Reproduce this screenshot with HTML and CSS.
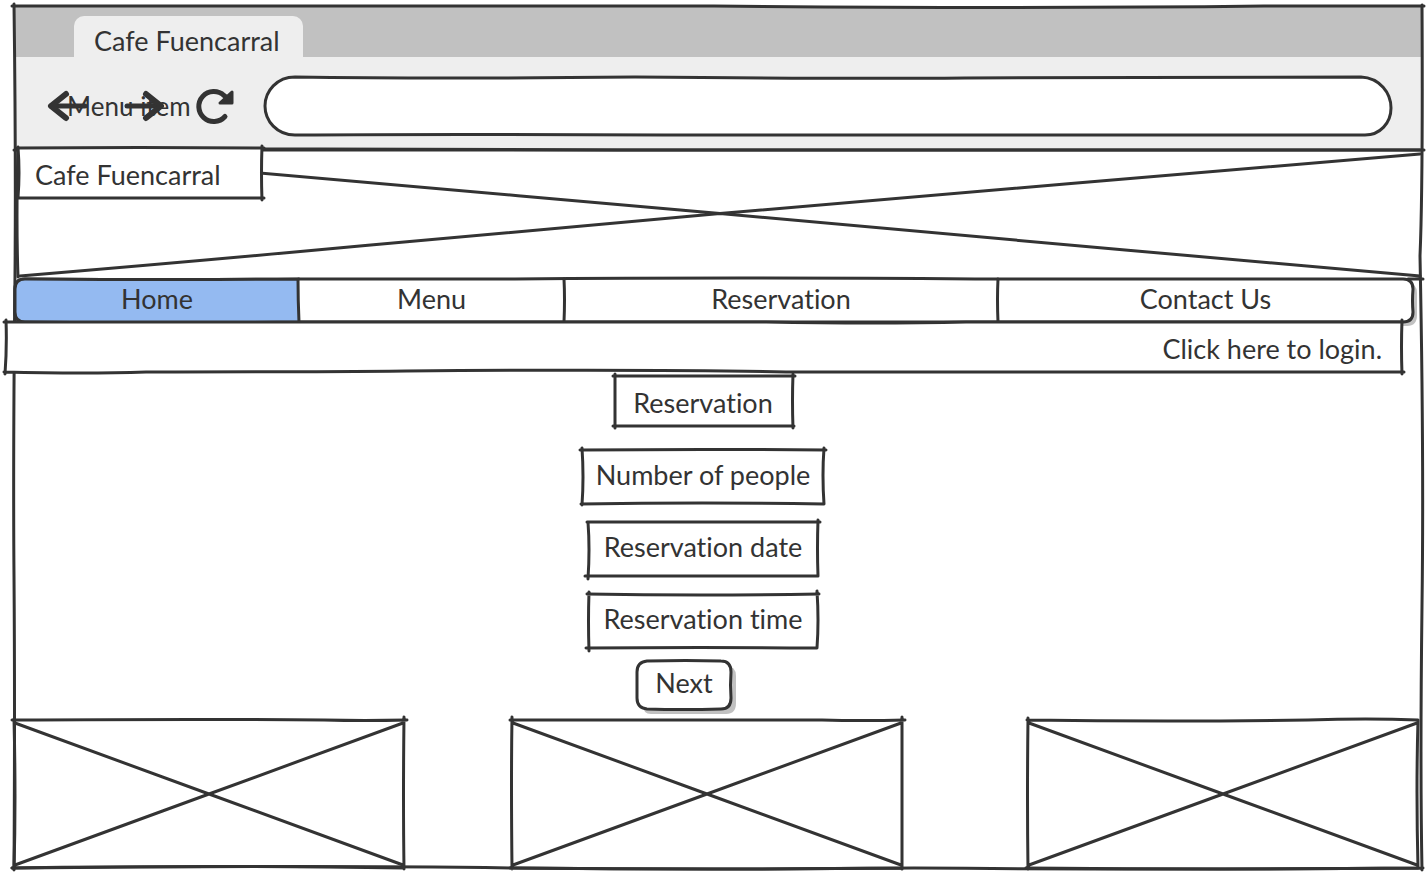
FILE: index.html
```html
<!DOCTYPE html>
<html lang="en">
<head>
<meta charset="utf-8">
<meta name="viewport" content="width=device-width, initial-scale=1">
<title>Cafe Fuencarral</title>
<link rel="stylesheet" href="styles.css">
</head>
<body>
<div class="browser">
  <header>
    <div class="tab-strip">
      <div class="tab">Cafe Fuencarral</div>
    </div>
    <div class="toolbar">
      <div class="controls">
        <span class="menu-item">Menu item</span>
        <button class="icon-button back" type="button" aria-label="Back">
          <svg width="40" height="30" viewBox="0 0 40 30"><path class="shaft" d="M3 15H37"/><path d="M18 3L3 15L18 27"/></svg>
        </button>
        <button class="icon-button forward" type="button" aria-label="Forward">
          <svg width="40" height="30" viewBox="0 0 40 30"><path class="shaft" d="M3 15H37"/><path d="M22 3L37 15L22 27"/></svg>
        </button>
        <button class="icon-button reload" type="button" aria-label="Reload">
          <svg width="38" height="36" viewBox="0 0 38 36"><path d="M30 28.500A15 15 0 1 1 29 7.500L31 9"/><path class="solid" d="M37 4V15H25Z"/></svg>
        </button>
      </div>
      <div class="address">
        <svg class="sketch" viewBox="0 0 1126 58" preserveAspectRatio="none"><path class="paper" d="M30 0Q170 2 370 0Q580 2 700 1Q850 0 1096 0C1115 1 1126 16 1126 31C1126 46 1115 58 1100 58Q700 59 400 58Q180 57 30 58C12 58 0 44 0 29C0 14 12 0 30 0Z"/></svg>
        <input type="text" aria-label="Address">
      </div>
    </div>
  </header>
  <svg class="sketch outline" viewBox="0 0 1408 862" preserveAspectRatio="none"><path d="M-2 0H700Q1000 3 1250 0H1410M0 -2Q2 150 1 270Q-1 450 0 570Q1 700 0 864M1408 -1Q1409 180 1406 250Q1410 450 1408 600Q1406 760 1408 864M-2 862Q300 859 500 862Q700 864 900 862Q1150 864 1409 862M0 144H1410"/></svg>
  <main>
    <section class="banner" aria-label="Banner">
      <svg class="sketch" viewBox="0 0 1402 130" preserveAspectRatio="none"><path d="M0 -2Q-2 70 0 128M2 127Q180 112 350 96L702 64L1050 34L1402 4M0 2Q300 28 500 46L702 64L1110 101Q1250 114 1402 127M0 0Q300 -2 600 0H1402M1390 130H1405"/></svg>
      <h1 class="brand">
        <svg class="sketch" viewBox="0 0 244 50" preserveAspectRatio="none"><path class="paper" stroke="none" d="M0 0H244V50H0Z"/><path d="M-1 0Q120 -1 246 0M0 -1Q2 25 0 50M0 50H246M244 -2Q243 25 244 52"/></svg>
        <span>Cafe Fuencarral</span>
      </h1>
    </section>
    <nav class="menu" aria-label="Main">
      <svg class="sketch" viewBox="0 0 1398 43" preserveAspectRatio="none"><path class="shade" d="M14 4H1392Q1402 4 1402 14V36Q1402 47 1392 47H14Z"/><path class="paper" d="M10 0Q170 1 284 0H500Q720 -2 960 0H1388Q1398 0 1398 10Q1397 22 1398 33Q1398 43 1388 43H284Q150 45 10 43Q0 43 0 33V10Q0 0 10 0Z"/><path class="active" d="M284 0Q170 1 10 0Q0 0 0 10V33Q0 43 10 43Q150 45 284 43Q283 20 283 0Z"/><path d="M549 0Q550 20 549 43M983 0Q982 20 983 43"/></svg>
      <a class="home" href="#home">Home</a>
      <a class="dishes" href="#menu">Menu</a>
      <a class="booking" href="#reservation">Reservation</a>
      <a class="contact" href="#contact">Contact Us</a>
    </nav>
    <div class="login">
      <svg class="sketch" viewBox="0 0 1396 50" preserveAspectRatio="none"><path class="paper" stroke="none" d="M0 0H1396V50H0Z"/><path d="M-2 0H760Q870 2 960 0H1396M0 -2Q1 25 -1 52M-2 50Q80 52 140 50Q300 50 400 49Q650 47 780 50H1398M1396 -2Q1395 25 1396 52"/></svg>
      <a href="#login">Click here to login.</a>
    </div>
    <form class="reservation">
      <h2 class="box title">
        <svg class="sketch" viewBox="0 0 178 50" preserveAspectRatio="none"><path d="M-1 0H181M1 -2V52M-1 50H180M179 -2Q178 25 179 52"/></svg>
        <span>Reservation</span>
      </h2>
      <div class="box people">
        <svg class="sketch" viewBox="0 0 242 54" preserveAspectRatio="none"><path d="M-2 0Q120 -1 244 0M0 -2Q2 27 0 55M-1 54Q120 52 242 54M242 -2Q240 25 242 54"/></svg>
        <input type="text" aria-label="Number of people" value="Number of people">
      </div>
      <div class="box date">
        <svg class="sketch" viewBox="0 0 230 54" preserveAspectRatio="none"><path d="M-1 0H232M0 0Q2 27 0 57M-3 54H230M230 -2Q229 27 230 54"/></svg>
        <input type="text" aria-label="Reservation date" value="Reservation date">
      </div>
      <div class="box time">
        <svg class="sketch" viewBox="0 0 228 54" preserveAspectRatio="none"><path d="M-2 0Q110 2 230 0M0 -2Q-1 27 0 57M-3 54Q110 53 228 54M228 -3Q230 27 228 54"/></svg>
        <input type="text" aria-label="Reservation time" value="Reservation time">
      </div>
      <button class="next" type="button">
        <svg class="sketch" viewBox="0 0 94 48" preserveAspectRatio="none"><path class="shade" d="M14 5H89Q99 5 99 15V42Q99 53 89 53H14Q6 53 6 44Z"/><path class="paper" d="M10 0Q50 -1 84 0Q94 0 94 11Q93 24 94 37Q94 48 84 48Q45 49 10 48Q0 47 0 37V11Q0 1 10 0Z"/></svg>
        <span>Next</span>
      </button>
    </form>
    <section class="gallery" aria-label="Photos">
      <svg class="photo first" viewBox="0 0 390 148" preserveAspectRatio="none"><path d="M-2 0Q200 -1 310 0Q350 1 393 0M0 -1Q2 80 0 149M390 -3Q389 80 390 149M-2 148Q200 145 390 148M1 3L195 74L389 145M1 145L195 74L389 3"/></svg>
      <svg class="photo second" viewBox="0 0 390 148" preserveAspectRatio="none"><path d="M-2 0H310Q350 1 393 0M0 -3Q-1 60 0 149M390 -3V149M-2 148Q200 150 390 148M1 3L195 74L389 145M1 145L195 74L389 3"/></svg>
      <svg class="photo third" viewBox="0 0 390 148" preserveAspectRatio="none"><path d="M-1 0Q140 2 280 0Q340 -2 390 0M0 -2Q-1 80 0 149M390 0Q388 70 390 148M-2 148Q200 150 390 148M1 3L195 74L389 145M1 145L195 74L389 3"/></svg>
    </section>
  </main>
</div>
</body>
</html>
```
FILE: styles.css
```css
* { box-sizing: border-box; }

body {
  margin: 0;
  padding: 6px 6px 6px 14px;
  background: #fff;
  color: #333;
  font: 27px/32px Lato, "Liberation Sans", sans-serif;
  font-variant-ligatures: none;
}

a { color: inherit; text-decoration: none; }

h1, h2 { margin: 0; font: inherit; }

input, button {
  padding: 0;
  border: 0;
  background: none;
  color: inherit;
  font: inherit;
}

h1, h2, input, button { font-variant-ligatures: none; }

svg {
  fill: none;
  stroke: #333;
  stroke-width: 3px;
  stroke-linecap: round;
  stroke-linejoin: round;
  overflow: visible;
}

.sketch path, .photo path { vector-effect: non-scaling-stroke; }

/* Hand-drawn outline laid behind the content of its box */
.sketch {
  position: absolute;
  inset: 0;
  width: 100%;
  height: 100%;
  z-index: -1;
  pointer-events: none;
}

.paper { fill: #fff; }
.shade { fill: #c1c1c1; stroke: none; }
.active { fill: #94baf1; }

.browser { position: relative; isolation: isolate; }
.outline { z-index: 0; }

.tab-strip {
  display: flex;
  align-items: flex-end;
  height: 51px;
  padding-left: 60px;
  background: #c1c1c1;
}

.tab {
  min-width: 229px;
  height: 41px;
  padding: 9px 20px 0;
  border-radius: 10px 10px 0 0;
  background: #eee;
}

.toolbar {
  display: flex;
  align-items: center;
  gap: 32px;
  height: 93px;
  padding: 5px 31px 0 34px;
  background: #eee;
}

.controls { position: relative; display: flex; align-items: center; }
.menu-item { width: 129px; padding-left: 19px; margin-right: 18px; font-size: 26px; white-space: nowrap; }

.icon-button { display: flex; }
.icon-button svg { stroke-width: 6px; }
.icon-button .shaft { stroke-width: 5px; }
.icon-button .solid { fill: #333; stroke-width: 3px; }
.reload svg { stroke-width: 5px; }
.back { position: absolute; left: 0; }
.forward { position: absolute; left: 76px; }

.address { position: relative; isolation: isolate; flex: 1; height: 58px; }
.address input { width: 100%; height: 100%; padding: 0 30px; }

main { position: relative; z-index: 1; }

.banner {
  position: relative;
  isolation: isolate;
  height: 129px;
  margin: 0 2px 0 4px;
}

.brand {
  position: absolute;
  top: -2px;
  left: 0;
  isolation: isolate;
  width: 244px;
  height: 50px;
  padding: 11px 17px;
}

.menu {
  position: relative;
  isolation: isolate;
  display: flex;
  height: 43px;
  margin: 0 9px 0 1px;
  text-align: center;
  line-height: 40px;
}

.home { flex: 284 0 0; }
.dishes { flex: 265 0 0; }
.booking { flex: 434 0 0; }
.contact { flex: 415 0 0; }

.login {
  position: relative;
  isolation: isolate;
  height: 50px;
  margin: 0 20px 0 -8px;
  padding: 11px 20px;
  text-align: right;
}

.reservation {
  display: flex;
  flex-direction: column;
  align-items: center;
  padding: 4px 30px 11px 0;
}

.box { position: relative; isolation: isolate; height: 54px; margin-bottom: 18px; }
.box input { width: 100%; height: 100%; padding: 0 0 6px; text-align: center; }
.title { width: 178px; height: 50px; margin-bottom: 24px; padding-top: 11px; text-align: center; }
.people { width: 242px; }
.date { width: 230px; }
.time { width: 228px; margin-bottom: 13px; }

.next {
  position: relative;
  isolation: isolate;
  width: 94px;
  height: 48px;
  margin-right: 38px;
  padding-bottom: 4px;
}

.gallery {
  display: grid;
  grid-template-columns: 390fr 108fr 390fr 126fr 390fr;
  height: 148px;
  margin-right: 4px;
}

.photo { width: 100%; height: 148px; }
.second { grid-column: 3; }
.third { grid-column: 5; }
```
